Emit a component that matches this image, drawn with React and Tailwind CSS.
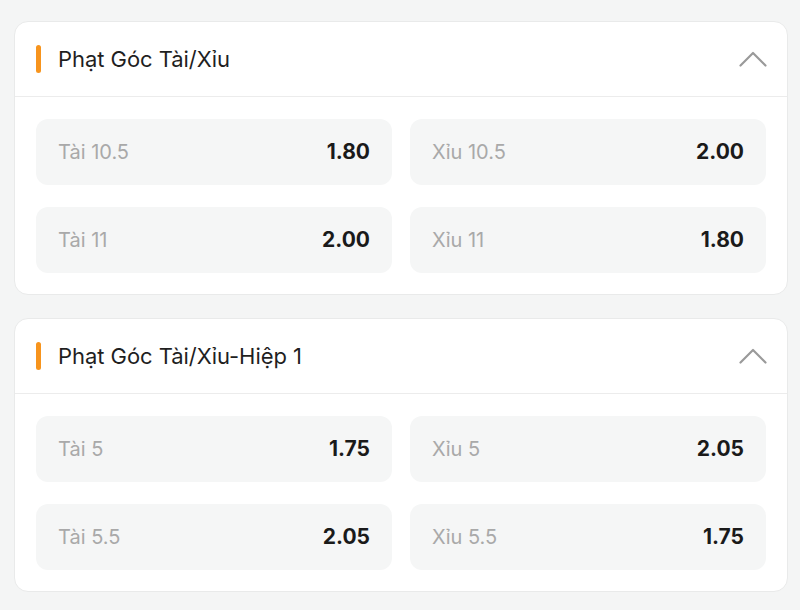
import React from 'react';

const markets = [
  {
    title: 'Phạt Góc Tài/Xỉu',
    rows: [
      [{ label: 'Tài 10.5', odds: '1.80' }, { label: 'Xỉu 10.5', odds: '2.00' }],
      [{ label: 'Tài 11', odds: '2.00' }, { label: 'Xỉu 11', odds: '1.80' }],
    ],
  },
  {
    title: 'Phạt Góc Tài/Xỉu-Hiệp 1',
    rows: [
      [{ label: 'Tài 5', odds: '1.75' }, { label: 'Xỉu 5', odds: '2.05' }],
      [{ label: 'Tài 5.5', odds: '2.05' }, { label: 'Xỉu 5.5', odds: '1.75' }],
    ],
  },
];

function Chevron() {
  return (
    <svg width="30" height="18" viewBox="0 0 30 18" fill="none" className="text-[#9a9a9a] mr-[-1px]">
      <path d="M2.5 15.5 L15 3 L27.5 15.5" stroke="currentColor" strokeWidth="2.2" strokeLinecap="round" strokeLinejoin="round" />
    </svg>
  );
}

function MarketCard({ market }) {
  return (
    <div className="w-[774px] bg-white border border-[#e9eaea] rounded-[14px] overflow-hidden">
      <div className="h-[75px] flex items-center justify-between pl-[21px] pr-[20px] border-b border-[#ececec]">
        <div className="flex items-center gap-[17px]">
          <span className="w-[5px] h-[28px] rounded-full bg-[#f7941d]"></span>
          <span className="text-[22px] text-[#1f1f1f] tracking-[-0.05px]">{market.title}</span>
        </div>
        <Chevron />
      </div>
      <div className="px-[21px] pt-[22px] pb-[21px] grid grid-cols-2 gap-x-[18px] gap-y-[22px]">
        {market.rows.flat().map((o) => (
          <button key={o.label} className="h-[66px] rounded-[12px] bg-[#f5f6f6] flex items-center justify-between px-[22px]">
            <span className="text-[20px] text-[#a9a9a9]">{o.label}</span>
            <span className="text-[21px] font-bold text-[#1a1a1a]">{o.odds}</span>
          </button>
        ))}
      </div>
    </div>
  );
}

export default function App() {
  return (
    <div className="w-[800px] h-[610px] bg-[#f4f5f5] pt-[21px] pl-[14px] flex flex-col gap-[23px]" style={{ fontFamily: 'Inter, "Noto Sans", sans-serif' }}>
      {markets.map((m) => (
        <MarketCard key={m.title} market={m} />
      ))}
    </div>
  );
}
